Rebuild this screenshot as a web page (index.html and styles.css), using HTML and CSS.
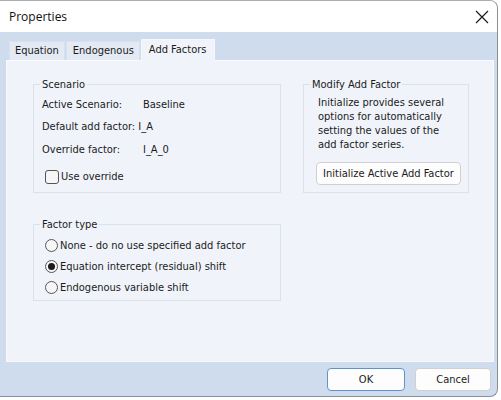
FILE: index.html
```html
<!DOCTYPE html>
<html>
<head>
<meta charset="utf-8">
<link rel="stylesheet" href="styles.css">
</head>
<body>
<div class="window">
  <div class="titlebar">
    <span class="title">Properties</span>
    <svg class="close" width="14" height="14" viewBox="0 0 14 14"><path d="M1 1L13 13M13 1L1 13" stroke="#1a1a1a" stroke-width="1.2" fill="none"/></svg>
  </div>
  <div class="client">
    <div class="tabs">
      <div class="tab">Equation</div>
      <div class="tab wide">Endogenous</div>
      <div class="tab active">Add Factors</div>
    </div>
    <div class="panel">
      <div class="col-left">
        <fieldset class="group scenario">
          <legend>Scenario</legend>
          <div class="row r1"><span class="lbl">Active Scenario:</span><span>Baseline</span></div>
          <div class="row"><span>Default add factor: I_A</span></div>
          <div class="row"><span class="lbl">Override factor:</span><span>I_A_0</span></div>
          <label class="check"><span class="box"></span>Use override</label>
        </fieldset>
        <fieldset class="group factor">
          <legend>Factor type</legend>
          <label class="radio"><span class="circle"></span>None - do no use specified add factor</label>
          <label class="radio"><span class="circle on"></span>Equation intercept (residual) shift</label>
          <label class="radio"><span class="circle"></span>Endogenous variable shift</label>
        </fieldset>
      </div>
      <fieldset class="group modify">
        <legend>Modify Add Factor</legend>
        <p class="desc">Initialize provides several options for automatically setting the values of the add factor series.</p>
        <button class="btn init">Initialize Active Add Factor</button>
      </fieldset>
    </div>
    <div class="footer">
      <button class="btn ok">OK</button>
      <button class="btn">Cancel</button>
    </div>
  </div>
</div>
</body>
</html>
```
FILE: styles.css
```css
html, body {
  margin: 0;
  padding: 0;
  background: #ffffff;
}
body {
  width: 501px;
  height: 400px;
  overflow: hidden;
  font-family: Tahoma, "DejaVu Sans Condensed", "Liberation Sans", sans-serif;
  font-size: 11px;
  color: #1b1b1b;
}
.window {
  width: 498px;
  height: 397px;
  border-right: 1px solid #8a8f96;
  border-bottom: 1px solid #8a8f96;
  border-top: 1px solid #a9aeb5;
  box-sizing: border-box;
  border-top-right-radius: 8px;
  border-bottom-right-radius: 8px;
  overflow: hidden;
  display: flex;
  flex-direction: column;
  background: #cfdcee;
}
.titlebar {
  height: 31px;
  background: #ffffff;
  display: flex;
  align-items: center;
  justify-content: space-between;
  padding: 0 8px 0 9px;
  flex: none;
}
.title {
  font-family: "Open Sans", "Liberation Sans", sans-serif;
  font-size: 12px;
  color: #111;
}
.client {
  flex: 1;
  display: flex;
  flex-direction: column;
  padding: 8px 3px 0 6px;
}
.tabs {
  display: flex;
  align-items: flex-end;
  height: 20px;
  padding-left: 3px;
}
.tab {
  height: 18px;
  line-height: 18px;
  padding: 0 5px;
  background: #e3eaf4;
  border: 1px solid #d6e0ee;
  border-bottom: none;
  margin-right: 1px;
  color: #1b1b1b;
}
.tab.wide { padding: 0 5px 0 6px; }
.tab.active {
  height: 21px;
  line-height: 20px;
  background: #f0f4fa;
  border-color: #f6f8fc;
  padding: 0 8px 0 7px;
  margin-bottom: -1px;
  position: relative;
}
.panel {
  height: 302px;
  background: #f0f4fa;
  border: 1px solid #f8fafd;
  box-sizing: border-box;
  display: flex;
  padding: 17px 0 0 26px;
  gap: 22px;
}
.col-left {
  display: flex;
  flex-direction: column;
  gap: 25px;
  width: 248px;
}
.group {
  margin: 0;
  border: 1px solid #dbe1e9;
  padding: 0;
  border-radius: 0;
}
.group legend {
  padding: 0 2px;
  color: #1b1b1b;
}
.scenario {
  height: 115px;
  padding: 2px 8px 0 8px;
  box-sizing: border-box;
}
.scenario legend { margin-left: -2px; }
.row {
  height: 22.5px;
  display: flex;
  align-items: center;
}
.lbl { width: 101px; }
.check {
  display: flex;
  align-items: center;
  height: 14px;
  margin-top: 9px;
  margin-left: 3px;
}
.box {
  width: 12px;
  height: 12px;
  border: 1px solid #555;
  border-radius: 3px;
  margin-right: 2px;
  background: #f6f6f6;
}
.factor {
  height: 83px;
  box-sizing: border-box;
  padding: 4px 8px 0 11px;
}
.factor legend { margin-left: -5px; }
.radio {
  display: flex;
  align-items: center;
  height: 21px;
}
.circle {
  width: 13px;
  height: 13px;
  border: 1px solid #555;
  border-radius: 50%;
  margin-right: 2px;
  box-sizing: border-box;
  background: #f6f6f6;
  display: flex;
  align-items: center;
  justify-content: center;
}
.circle.on::after {
  content: "";
  width: 7px;
  height: 7px;
  border-radius: 50%;
  background: #1b1b1b;
}
.modify {
  width: 165px;
  height: 115px;
  box-sizing: border-box;
  padding: 0 7px 0 14px;
}
.modify legend { margin-left: -8px; }
.desc {
  margin: 5px 0 0 0;
  line-height: 14px;
  width: 132px;
}
.btn {
  font-family: inherit;
  font-size: 11px;
  color: #1b1b1b;
  background: #fdfdfd;
  border: 1px solid #d0d0d0;
  border-radius: 4px;
  height: 23px;
  padding: 0;
}
.init {
  margin-top: 10px;
  margin-left: -2px;
  width: 145px;
}
.footer {
  display: flex;
  justify-content: flex-end;
  gap: 10px;
  padding: 6px 3px 0 0;
}
.footer .btn { width: 76px; }
.footer .ok {
  border: 1px solid #5f94c8;
  width: 78px;
}
```
